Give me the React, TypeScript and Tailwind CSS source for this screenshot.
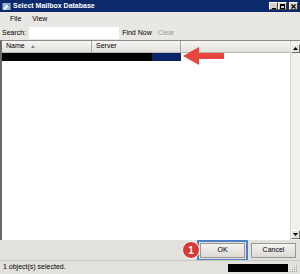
import { type ReactNode } from "react";

function CaptionButton({ children }: { children: ReactNode }) {
  return (
    <div className="flex h-[8px] w-[9px] items-center justify-center border border-t-white border-l-white border-r-[#404040] border-b-[#404040] bg-[#d4d0c8]">
      {children}
    </div>
  );
}

function DialogButton({ label, focused = false }: { label: string; focused?: boolean }) {
  return (
    <div className={focused ? "rounded-[1px] border-2 border-[#4f7fc6] p-px" : "p-[3px]"}>
      <div className="flex h-[15px] w-[45px] items-center justify-center border border-[#9a9894] bg-gradient-to-b from-[#f4f3f1] to-[#dcdad5] text-[7px]">
        {label}
      </div>
    </div>
  );
}

function ScrollArrow({ up }: { up?: boolean }) {
  return (
    <div className="flex h-[9px] w-[9px] items-center justify-center border border-t-white border-l-white border-r-[#707070] border-b-[#707070] bg-[#e4e2dd]">
      <svg width="5" height="3" viewBox="0 0 5 3">
        <path d={up ? "M0 3h5L2.5 0z" : "M0 0h5L2.5 3z"} fill="#000" />
      </svg>
    </div>
  );
}

export default function App() {
  return (
    <div
      className="relative flex h-[274px] w-[300px] flex-col overflow-hidden bg-[#e3e1dc] text-[7px] text-black"
      style={{ fontFamily: '"Liberation Sans", Arial, sans-serif' }}
    >
      {/* title bar */}
      <div className="flex h-[12px] items-center bg-[#0b2a6c] pl-[2px] pr-[2px]">
        <svg width="9" height="9" viewBox="0 0 9 9" className="mr-[2px]">
          <rect x="0.5" y="1" width="8" height="7" fill="#9fb4d2" />
          <path d="M1 7l4-5 2 2-4 4z" fill="#e8edf4" />
          <path d="M5 1.5l2.5 2.5" stroke="#3c5a8a" strokeWidth="1" />
        </svg>
        <span className="font-bold text-white">Select Mailbox Database</span>
        <div className="ml-auto flex items-center">
          <CaptionButton>
            <div className="mt-[4px] h-px w-[4px] bg-black" />
          </CaptionButton>
          <CaptionButton>
            <div className="h-[5px] w-[5px] border border-t-2 border-black" />
          </CaptionButton>
          <div className="ml-[2px]">
            <CaptionButton>
              <svg width="5" height="5" viewBox="0 0 5 5">
                <path d="M0.5 0.5l4 4M4.5 0.5l-4 4" stroke="#000" strokeWidth="1.2" />
              </svg>
            </CaptionButton>
          </div>
        </div>
      </div>

      {/* menu bar */}
      <div className="flex h-[14px] items-center gap-[11px] bg-[#e9e7e3] pl-[10px]">
        <span>File</span>
        <span>View</span>
      </div>

      {/* search row */}
      <div className="flex h-[14px] items-center bg-[#e9e7e3] pl-[2px]">
        <span>Search:</span>
        <div className="ml-[3px] h-[12px] w-[90px] bg-white" />
        <span className="ml-[3px]">Find Now</span>
        <span className="ml-[6px] text-[#9d9b97]">Clear</span>
      </div>

      {/* list */}
      <div className="flex h-[200px] border-t border-l-2 border-t-[#8c8a86] border-l-[#6c6a66] bg-white">
        <div className="flex flex-1 flex-col">
          <div className="flex h-[12px] border-b border-[#b9b7b2] bg-gradient-to-b from-[#f7f6f4] to-[#e2e0db]">
            <div className="flex w-[90px] items-center border-r border-[#a8a6a1] pl-[4px]">
              <span>Name</span>
              <svg width="4" height="3" viewBox="0 0 4 3" className="ml-[6px]">
                <path d="M0 3h4L2 0z" fill="#8a8884" />
              </svg>
            </div>
            <div className="flex w-[89px] items-center border-r border-[#a8a6a1] pl-[4px]">Server</div>
          </div>
          <div className="flex h-[8px]">
            <div className="w-[150px] bg-black" />
            <div className="w-[29px] bg-[#0a2468]" />
          </div>
        </div>
        <div className="flex w-[10px] flex-col justify-between border-l border-[#d8d6d1] bg-[#f2f1ee] pt-[3px] pb-px">
          <ScrollArrow up />
          <ScrollArrow />
        </div>
      </div>

      {/* buttons */}
      <div className="flex h-[20px] items-center justify-end pr-[1px]">
        <DialogButton label="OK" focused />
        <DialogButton label="Cancel" />
      </div>

      {/* status bar */}
      <div className="flex h-[14px] items-center border-t border-[#c8c6c1] bg-[#e3e1dc] pl-[3px]">
        <span>1 object(s) selected.</span>
        <div className="ml-auto mr-[2px] h-[8px] w-[60px] bg-black" />
        <svg width="8" height="8" viewBox="0 0 8 8" className="mr-[2px] mt-[3px]">
          <g fill="#a09e99">
            <rect x="6" y="0" width="1" height="1" />
            <rect x="4" y="2" width="1" height="1" />
            <rect x="6" y="2" width="1" height="1" />
            <rect x="2" y="4" width="1" height="1" />
            <rect x="4" y="4" width="1" height="1" />
            <rect x="6" y="4" width="1" height="1" />
            <rect x="0" y="6" width="1" height="1" />
            <rect x="2" y="6" width="1" height="1" />
            <rect x="4" y="6" width="1" height="1" />
            <rect x="6" y="6" width="1" height="1" />
          </g>
        </svg>
      </div>

      {/* annotation: red arrow */}
      <svg width="44" height="20" viewBox="0 0 44 20" className="absolute left-[182px] top-[46px]">
        <path d="M1 10L17 1v6h25v6H17v6z" fill="#e8453f" />
      </svg>

      {/* annotation: numbered badge */}
      <div className="absolute left-[182px] top-[241px] flex h-[18px] w-[18px] items-center justify-center rounded-full border border-white bg-[#d63a34] text-[10px] font-bold text-white">
        1
      </div>
    </div>
  );
}
